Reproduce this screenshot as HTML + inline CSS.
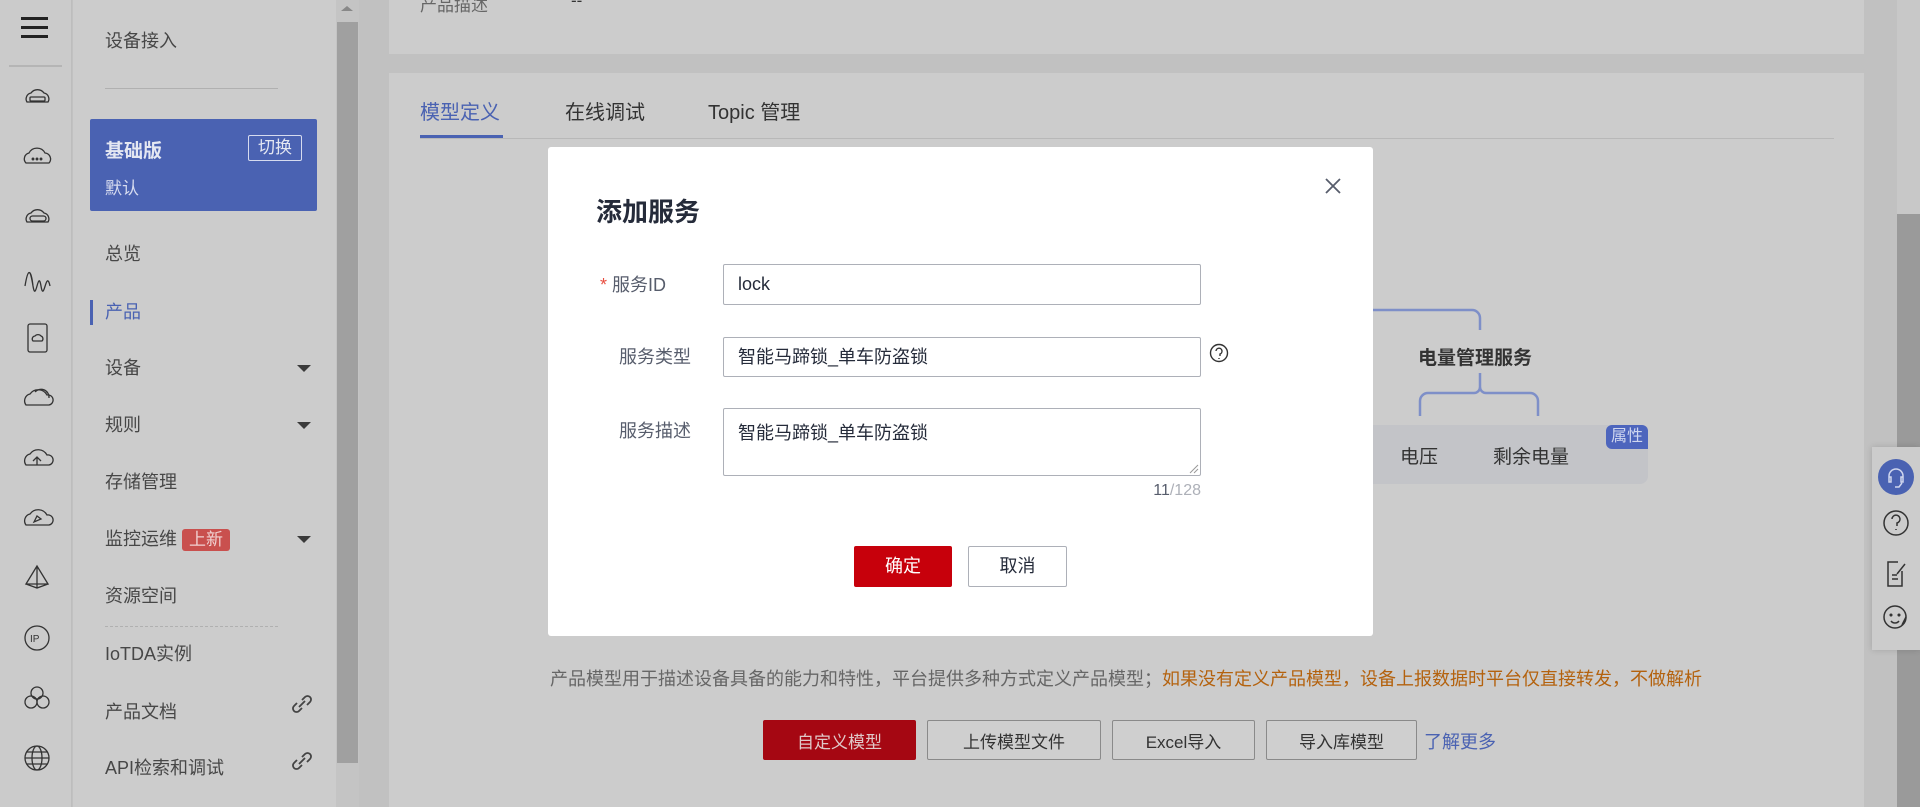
<!DOCTYPE html>
<html><head><meta charset="utf-8"><style>
*{margin:0;padding:0;box-sizing:border-box}
body{width:1920px;height:807px;overflow:hidden;background:#c1c1c1;font-family:"Liberation Sans","Noto Sans CJK SC",sans-serif;position:relative;color:#444}
.a{position:absolute;white-space:nowrap}
.mi{position:absolute;left:105px;font-size:18px;color:#474747;line-height:24px}
.tri{position:absolute;left:297px;width:0;height:0;border-left:7px solid transparent;border-right:7px solid transparent;border-top:7px solid #3a3a3a}
.btn{position:absolute;height:40px;border:1px solid #8a8a8a;background:#cfcfcf;font-size:17px;color:#333;display:flex;align-items:center;justify-content:center;border-radius:2px}
.lbl{position:absolute;font-size:18px;color:#575d6c;line-height:24px}
.inp{position:absolute;left:723px;width:478px;border:1px solid #adb0b8;border-radius:2px;font-size:18px;color:#252b3a;padding-left:14px}
</style></head><body>
<div class="a" style="left:0;top:0;width:72px;height:807px;background:#cbcbcb;border-right:1px solid #bdbdbd"></div>
<div class="a" style="left:21px;top:17px;width:27px;height:3px;background:#222;box-shadow:0 9px 0 #222,0 18px 0 #222"></div>
<div class="a" style="left:9px;top:65px;width:53px;height:2px;background:#b5b5b5"></div>
<svg class="a" style="left:0;top:0" width="72" height="807" fill="none" stroke="#333" stroke-width="1.3">
<g transform="translate(24,88)"><path d="M3 14a6 6 0 0 1 4-9 8 8 0 0 1 13 0 6 6 0 0 1 4 9z"/><rect x="6" y="9" width="15" height="4" rx="1"/></g>
<g transform="translate(23,148)"><path d="M3 15a6 6 0 0 1 3-10 9 9 0 0 1 16 0 6 6 0 0 1 4 10z"/><circle cx="10" cy="11" r=".8"/><circle cx="14" cy="11" r=".8"/><circle cx="18" cy="11" r=".8"/></g>
<g transform="translate(24,208)"><path d="M3 14a6 6 0 0 1 4-9 8 8 0 0 1 13 0 6 6 0 0 1 4 9z"/><rect x="6" y="8" width="16" height="5" rx="2.5"/></g>
<g transform="translate(24,268)"><path d="M1 18C4 0 6 0 9 18S14 0 17 18 22 0 26 18M1 18C4 0 7 0 9 18"/></g>
<g transform="translate(28,324)"><rect x="0" y="0" width="19" height="28" rx="2"/><path d="M5 17a3 3 0 0 1 2-5 4 4 0 0 1 6 0 3 3 0 0 1 1 5z"/></g>
<g transform="translate(23,388)"><path d="M3 17a7 7 0 0 1 4-11 10 10 0 0 1 17 1 5 5 0 0 1 2 10z M12 4a8 8 0 0 1 14 6"/></g>
<g transform="translate(23,448)"><path d="M3 17a7 7 0 0 1 4-11 10 10 0 0 1 17 1 5 5 0 0 1 2 10z M14 17v-7 M10 13l4-4 4 4"/></g>
<g transform="translate(23,508)"><path d="M3 17a7 7 0 0 1 4-11 10 10 0 0 1 17 1 5 5 0 0 1 2 10z M11 14l3-6 4 3z"/></g>
<g transform="translate(26,566)"><path d="M11 0L0 18h22z M11 0v22 M0 18l11 4 11-4"/></g>
<g transform="translate(25,626)"><circle cx="12" cy="12" r="12"/><text x="5" y="16" font-size="10" fill="#333" stroke="none" font-family="Liberation Sans">IP</text></g>
<g transform="translate(25,686)"><circle cx="12" cy="7" r="6"/><circle cx="6" cy="16" r="6"/><circle cx="18" cy="16" r="6"/></g>
<g transform="translate(25,746)"><circle cx="12" cy="12" r="12"/><ellipse cx="12" cy="12" rx="5" ry="12"/><path d="M0 12h24M2 6h20M2 18h20"/></g>
</svg>
<div class="a" style="left:73px;top:0;width:263px;height:807px;background:#cccccc"></div>
<div class="mi" style="top:29px">设备接入</div>
<div class="a" style="left:105px;top:88px;width:173px;height:1px;background:#b0b0b0"></div>
<div class="a" style="left:90px;top:119px;width:227px;height:92px;background:#4a62b2;border-radius:2px"></div>
<div class="a" style="left:105px;top:136px;font-size:19px;font-weight:bold;color:#e4e7f2">基础版</div>
<div class="a" style="left:248px;top:135px;width:54px;height:26px;border:1px solid #d6dbef;border-radius:2px;color:#e4e7f2;font-size:17px;text-align:center;line-height:24px">切换</div>
<div class="a" style="left:105px;top:174px;font-size:17px;color:#d6dbef">默认</div>
<div class="mi" style="top:242px">总览</div>
<div class="a" style="left:90px;top:300px;width:3px;height:25px;background:#4a62b2"></div>
<div class="mi" style="top:300px;color:#4a62b2">产品</div>
<div class="mi" style="top:356px">设备</div><div class="tri" style="top:365px"></div>
<div class="mi" style="top:413px">规则</div><div class="tri" style="top:422px"></div>
<div class="mi" style="top:470px">存储管理</div>
<div class="mi" style="top:527px">监控运维</div>
<div class="a" style="left:182px;top:529px;width:48px;height:22px;background:#c9504e;border-radius:3px;color:#f0d0d0;font-size:17px;line-height:22px;text-align:center">上新</div>
<div class="tri" style="top:536px"></div>
<div class="mi" style="top:584px">资源空间</div>
<div class="a" style="left:105px;top:626px;width:173px;border-top:1px dashed #b0b0b0"></div>
<div class="mi" style="top:642px">IoTDA实例</div>
<div class="mi" style="top:700px">产品文档</div>
<div class="mi" style="top:756px">API检索和调试</div>
<svg class="a" style="left:290px;top:692px" width="24" height="24" fill="none" stroke="#444" stroke-width="1.8"><path d="M9 15l6-6M7 11l-3 3a3.5 3.5 0 0 0 5 5l3-3M17 13l3-3a3.5 3.5 0 0 0-5-5l-3 3"/></svg>
<svg class="a" style="left:290px;top:749px" width="24" height="24" fill="none" stroke="#444" stroke-width="1.8"><path d="M9 15l6-6M7 11l-3 3a3.5 3.5 0 0 0 5 5l3-3M17 13l3-3a3.5 3.5 0 0 0-5-5l-3 3"/></svg>
<div class="a" style="left:336px;top:0;width:23px;height:807px;background:#c4c4c4"></div>
<div class="a" style="left:337px;top:22px;width:21px;height:741px;background:#a0a0a0"></div>
<div class="a" style="left:341px;top:6px;width:0;height:0;border-left:6px solid transparent;border-right:6px solid transparent;border-bottom:5px solid #888"></div>
<div class="a" style="left:389px;top:0;width:1475px;height:54px;background:#cccccc"></div>
<div class="a" style="left:420px;top:-9px;font-size:17px;color:#666">产品描述</div>
<div class="a" style="left:571px;top:-9px;font-size:17px;color:#333">--</div>
<div class="a" style="left:389px;top:73px;width:1475px;height:734px;background:#cccccc"></div>
<div class="a" style="left:420px;top:96px;font-size:20px;color:#4a62b2">模型定义</div>
<div class="a" style="left:565px;top:96px;font-size:20px;color:#333">在线调试</div>
<div class="a" style="left:708px;top:96px;font-size:20px;color:#333">Topic 管理</div>
<div class="a" style="left:420px;top:138px;width:1414px;height:1px;background:#b8b8b8"></div>
<div class="a" style="left:420px;top:135px;width:83px;height:3px;background:#4a62b2"></div>
<svg class="a" style="left:1300px;top:300px" width="300" height="130" fill="none" stroke="#7e8fc8" stroke-width="2.5"><path d="M0 10H172a8 8 0 0 1 8 8v12"/><path d="M180 73v14a6 6 0 0 1-6 6H128a8 8 0 0 0-8 8v15 M180 87a6 6 0 0 0 6 6h44a8 8 0 0 1 8 8v15"/></svg>
<div class="a" style="left:1418px;top:343px;font-size:19px;font-weight:bold;color:#333">电量管理服务</div>
<div class="a" style="left:1300px;top:425px;width:348px;height:59px;background:#c3c4c8;border-radius:0 8px 8px 0"></div>
<div class="a" style="left:1400px;top:442px;font-size:19px;color:#333">电压</div>
<div class="a" style="left:1493px;top:442px;font-size:19px;color:#333">剩余电量</div>
<div class="a" style="left:1606px;top:425px;width:42px;height:24px;background:#4d65bd;border-radius:6px 6px 0 6px;color:#cfd6ef;font-size:16px;text-align:center;line-height:24px">属性</div>
<div class="a" style="left:550px;top:665px;font-size:18px;color:#666">产品模型用于描述设备具备的能力和特性，平台提供多种方式定义产品模型；<span style="color:#b4620e">如果没有定义产品模型，设备上报数据时平台仅直接转发，不做解析</span></div>
<div class="btn" style="left:763px;top:720px;width:153px;background:#a50712;border-color:#a50712;color:#e0c8c8">自定义模型</div>
<div class="btn" style="left:927px;top:720px;width:174px">上传模型文件</div>
<div class="btn" style="left:1112px;top:720px;width:143px">Excel导入</div>
<div class="btn" style="left:1266px;top:720px;width:151px">导入库模型</div>
<div class="a" style="left:1424px;top:728px;font-size:18px;color:#4a62b2">了解更多</div>
<div class="a" style="left:1897px;top:0;width:23px;height:214px;background:#c8c8c8"></div>
<div class="a" style="left:1897px;top:214px;width:23px;height:593px;background:#9a9a9a"></div>
<div class="a" style="left:1872px;top:447px;width:48px;height:203px;background:#cccccc;box-shadow:0 0 6px rgba(0,0,0,.15)"></div>
<svg class="a" style="left:1872px;top:447px" width="48" height="203" fill="none" stroke="#333" stroke-width="1.5">
<circle cx="24" cy="30" r="18" fill="#4a62b2" stroke="none"/><path d="M17 33v-4a7 7 0 0 1 14 0v4M17 30h2v5h-2zM29 30h2v5h-2zM30 36l-3 4h-4" stroke="#d0d6ee"/>
<circle cx="24" cy="76" r="12"/><path d="M20 72a4 4 0 1 1 5 4v3M24 82v1"/>
<path d="M26 115h-10v24h14v-15M20 128h5M20 132h6M25 127l8-10"/>
<circle cx="23" cy="170" r="11"/><circle cx="19" cy="168" r=".8"/><circle cx="27" cy="168" r=".8"/><path d="M19 174a5 5 0 0 0 8 0M30 178l4-8"/>
</svg>
<div class="a" style="left:548px;top:147px;width:825px;height:489px;background:#fff;border-radius:3px"></div>
<div class="a" style="left:596px;top:192px;font-size:26px;font-weight:bold;color:#252b3a">添加服务</div>
<svg class="a" style="left:1325px;top:178px" width="16" height="16" stroke="#575d6c" stroke-width="1.8"><path d="M1 1L15 15M15 1L1 15"/></svg>
<div class="lbl" style="left:600px;top:273px"><span style="color:#e84e40">*</span> 服务ID</div>
<div class="lbl" style="left:619px;top:345px">服务类型</div>
<div class="lbl" style="left:619px;top:419px">服务描述</div>
<div class="inp" style="top:264px;height:41px;line-height:39px">lock</div>
<div class="inp" style="top:337px;height:40px;line-height:38px">智能马蹄锁_单车防盗锁</div>
<div class="inp" style="top:408px;height:68px;line-height:24px;padding-top:12px">智能马蹄锁_单车防盗锁</div>
<svg class="a" style="left:1187px;top:462px" width="12" height="12" stroke="#999" stroke-width="1"><path d="M11 3L3 11M11 7L7 11"/></svg>
<svg class="a" style="left:1209px;top:343px" width="20" height="20" fill="none" stroke="#333" stroke-width="1.4"><circle cx="10" cy="10" r="8.5"/><path d="M7 8a3 3 0 1 1 4 3v2M10 15v1"/></svg>
<div class="a" style="left:1140px;top:482px;width:61px;text-align:right;font-size:16px;color:#adb0b8"><span style="color:#575d6c">11</span>/128</div>
<div class="a" style="left:854px;top:546px;width:98px;height:41px;background:#c7000b;border-radius:2px;color:#fff;font-size:18px;text-align:center;line-height:41px">确定</div>
<div class="a" style="left:968px;top:546px;width:99px;height:41px;border:1px solid #adb0b8;border-radius:2px;color:#252b3a;font-size:18px;text-align:center;line-height:39px">取消</div>
</body></html>
